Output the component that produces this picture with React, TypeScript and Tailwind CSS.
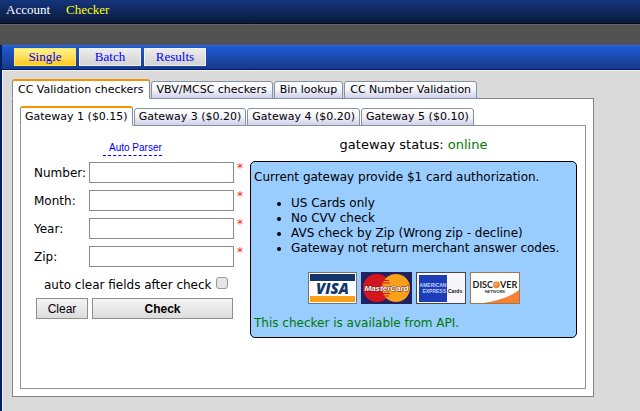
import React, { useState } from "react";

const menuItems = [
	{ label: "Single", active: true },
	{ label: "Batch", active: false },
	{ label: "Results", active: false },
];

const sections = [
	"CC Validation checkers",
	"VBV/MCSC checkers",
	"Bin lookup",
	"CC Number Validation",
];

const gateways = [
	"Gateway 1 ($0.15)",
	"Gateway 3 ($0.20)",
	"Gateway 4 ($0.20)",
	"Gateway 5 ($0.10)",
];

const fields = ["Number", "Month", "Year", "Zip"];

const notes = [
	"US Cards only",
	"No CVV check",
	"AVS check by Zip (Wrong zip - decline)",
	"Gateway not return merchant answer codes.",
];

interface TabsProps {
	label: string;
	items: string[];
	tabClass: string;
}

const Tabs = ({ label, items, tabClass }: TabsProps) => {
	const [selected, setSelected] = useState(0);

	return (
		<div role="tablist" aria-label={label} className="flex items-end gap-px -mb-px">
			{items.map((item, i) => (
				<button
					key={item}
					type="button"
					role="tab"
					aria-selected={i === selected}
					onClick={() => setSelected(i)}
					className={`${tabClass} ${
						i === selected
							? "h-5 rounded-t-[3px] border border-t-2 border-[#7f8e94] border-t-[#f59300] border-b-white bg-white text-[11px] leading-4 whitespace-nowrap"
							: "h-[18px] rounded-t-[3px] border border-[#8494a0] bg-gradient-to-b from-white via-[#f3f3fa] to-[#cfcfec] text-[11px] leading-4 whitespace-nowrap"
					}`}
				>
					{item}
				</button>
			))}
		</div>
	);
};

const VisaLogo = () => (
	<svg width="49" height="32" viewBox="0 0 49 32" role="img" aria-label="Visa">
		<rect width="49" height="32" fill="#7d7468" />
		<rect x="1" y="1" width="47" height="30" fill="#fff" />
		<rect x="2" y="2" width="45" height="7" fill="#12356e" />
		<rect x="2" y="24" width="45" height="6" fill="#f9a01b" />
		<text
			x="24.5"
			y="22"
			textAnchor="middle"
			fontFamily="Open Sans, sans-serif"
			fontSize="15"
			fontWeight="800"
			fontStyle="italic"
			fill="#12356e"
		>
			VISA
		</text>
	</svg>
);

const MasterCardLogo = () => (
	<svg width="51" height="32" viewBox="0 0 51 32" role="img" aria-label="MasterCard">
		<rect width="51" height="32" fill="#23205f" />
		<circle cx="16" cy="16" r="14" fill="#d3151d" />
		<circle cx="35" cy="16" r="14" fill="#f9a01b" />
		<path
			d="M23 8.5h5M22 11h7M22 21.5h7M23 24h5"
			stroke="#d3151d"
			strokeWidth="1.2"
		/>
		<text
			x="25.5"
			y="19"
			textAnchor="middle"
			fontFamily="Liberation Sans, sans-serif"
			fontSize="8"
			fontWeight="700"
			fontStyle="italic"
			fill="#fff"
			stroke="#5c1420"
			strokeWidth="0.8"
			paintOrder="stroke"
		>
			MasterCard
		</text>
	</svg>
);

const AmexLogo = () => (
	<svg width="50" height="32" viewBox="0 0 50 32" role="img" aria-label="American Express Cards">
		<rect width="50" height="32" fill="#4b4442" />
		<rect x="1" y="1" width="48" height="30" fill="#f7f7fb" />
		<rect x="3" y="3" width="28" height="27" fill="#1c3db8" />
		<g fontFamily="Liberation Sans, sans-serif" fontSize="5" fontWeight="700" fill="#c3cffa">
			<text x="17" y="15" textAnchor="middle">
				AMERICAN
			</text>
			<text x="30" y="21" textAnchor="end">
				EXPRESS
			</text>
			<text x="32" y="21" fill="#111">
				Cards
			</text>
		</g>
	</svg>
);

const DiscoverLogo = () => (
	<svg width="50" height="32" viewBox="0 0 50 32" role="img" aria-label="Discover Network">
		<rect width="50" height="32" fill="#a5764e" />
		<rect x="1" y="1" width="48" height="30" fill="#fff" />
		<path d="M49 18v13H13C28 29 40 25 49 18z" fill="#f58232" />
		<g fontFamily="Lato, sans-serif" fontWeight="700" fill="#222">
			<text x="23" y="16" fontSize="9" textAnchor="end">
				DISC
			</text>
			<text x="30" y="16" fontSize="9">
				VER
			</text>
			<text x="25" y="21" fontSize="4" textAnchor="middle">
				NETWORK
			</text>
		</g>
		<circle cx="26.5" cy="12.8" r="3.4" fill="#f58232" />
		<circle cx="26" cy="12.3" r="1.4" fill="#fab27f" />
	</svg>
);

const CheckForm = () => {
	const [autoClear, setAutoClear] = useState(false);

	return (
		<form className="w-[215px] shrink-0" onSubmit={(e) => e.preventDefault()}>
			<div className="pl-[75px] pt-[14px] mb-[6px] flex">
				<a
					href="#parser"
					className="font-['Liberation_Sans',sans-serif] text-[10px] leading-3 pl-[6px] pb-[1px] border-b border-dashed border-[#0000ff] text-[#0000ff]"
				>
					Auto Parser
				</a>
			</div>
			<div className="pl-[6px] flex flex-col gap-[7px]">
				{fields.map((field) => (
					<div key={field} className="flex items-center">
						<label htmlFor={field} className="w-[55px] text-[12px]">
							{field}:
						</label>
						<input
							id={field}
							type="text"
							autoComplete="off"
							className="w-[145px] h-[21px] px-1 border border-[#8a8a8a] bg-white text-[12px]"
						/>
						<span className="ml-[3px] self-start text-[12px] leading-3 text-[#ff2020]">*</span>
					</div>
				))}
			</div>
			<div className="mt-[10px] pl-4 flex items-center text-[12px] leading-4">
				<label htmlFor="autoClear">auto clear fields after check</label>
				<input
					id="autoClear"
					type="checkbox"
					checked={autoClear}
					onChange={(e) => setAutoClear(e.target.checked)}
					className="appearance-none size-3 ml-1 mb-1 rounded-[3px] border border-[#9a9a9a] bg-[#e6e6e6] checked:bg-[#7a9ad0]"
				/>
			</div>
			<div className="mt-[5px] pl-2 flex gap-1 font-['Liberation_Sans',sans-serif] text-[12px]">
				<button
					type="reset"
					className="w-[52px] h-[21px] border border-[#8f8f8f] bg-gradient-to-b from-[#f4f4f4] to-[#dcdcdc]"
				>
					Clear
				</button>
				<button
					type="submit"
					className="w-[141px] h-[21px] border border-[#8f8f8f] bg-gradient-to-b from-[#f4f4f4] to-[#dcdcdc] font-bold"
				>
					Check
				</button>
			</div>
		</form>
	);
};

const GatewayInfo = () => (
	<div className="grow pl-[7px] text-[12px]">
		<p className="pt-[9px] text-center text-[13px] leading-4">
			gateway status: <span className="text-[#007800]">online</span>
		</p>
		<div className="mt-[8px] px-[3px] pt-2 pb-[6px] rounded-[5px] border border-black bg-[#99ccff] leading-[15px]">
			<p>Current gateway provide $1 card authorization.</p>
			<ul className="mt-[11px] pl-[37px] list-disc">
				{notes.map((note) => (
					<li key={note} className="whitespace-nowrap">
						{note}
					</li>
				))}
			</ul>
			<div className="mt-4 flex justify-center gap-1">
				<VisaLogo />
				<MasterCardLogo />
				<AmexLogo />
				<DiscoverLogo />
			</div>
			<p className="mt-3 text-[#007800]">This checker is available from API.</p>
		</div>
	</div>
);

const App = () => {
	return (
		<div className="min-h-screen flex flex-col bg-[#dadada] font-['DejaVu_Sans',Verdana,sans-serif] text-black">
			{/* Site header */}
			<nav className="h-6 px-[6px] flex gap-4 border-b border-[#050b1c] bg-gradient-to-b from-[#14357c] to-[#0a1a3c] font-['Liberation_Serif',serif] text-[13px] leading-5">
				<a href="#account" className="text-white">
					Account
				</a>
				<a href="#checker" className="text-[#ffff00]">
					Checker
				</a>
			</nav>
			<div className="h-[21px] border-t border-[#6a6260] bg-[#525252]" />

			<div className="grow border-l-2 border-[#00205f]">
				{/* Checker mode menu */}
				<nav className="h-[25px] pl-3 pt-[2px] flex gap-[3px] border-y border-t-[#2a6ae6] border-b-[#001a70] bg-gradient-to-b from-[#1e5ad6] to-[#173a88] font-['Liberation_Serif',serif] text-[13px]">
					{menuItems.map((item) => (
						<a
							key={item.label}
							href={`#${item.label}`}
							className={
								item.active
									? "w-[62px] h-[18px] border border-[#ffe860] bg-gradient-to-b from-[#fff48a] to-[#ffc800] text-center leading-4 text-[#0000ff]"
									: "w-[62px] h-[18px] border border-[#f2f2f2] bg-gradient-to-b from-[#ececec] to-[#d2d2d2] text-center leading-4 text-[#0000ff]"
							}
						>
							{item.label}
						</a>
					))}
				</nav>

				<main className="border-t border-l border-[#f4f0ea] pt-[8px] pl-[9px] pr-[46px] pb-[14px]">
					<Tabs label="Checkers" items={sections} tabClass="px-[5px]" />
					<div className="border border-[#808488] bg-white px-[7px] pt-[7px] pb-[7px]">
						<Tabs label="Gateways" items={gateways} tabClass="px-1" />
						<div className="border border-[#909498] bg-white pl-[7px] pr-[8px] pt-[2px] pb-[50px] flex items-start">
							<CheckForm />
							<GatewayInfo />
						</div>
					</div>
				</main>
			</div>
		</div>
	);
};

export default App;
